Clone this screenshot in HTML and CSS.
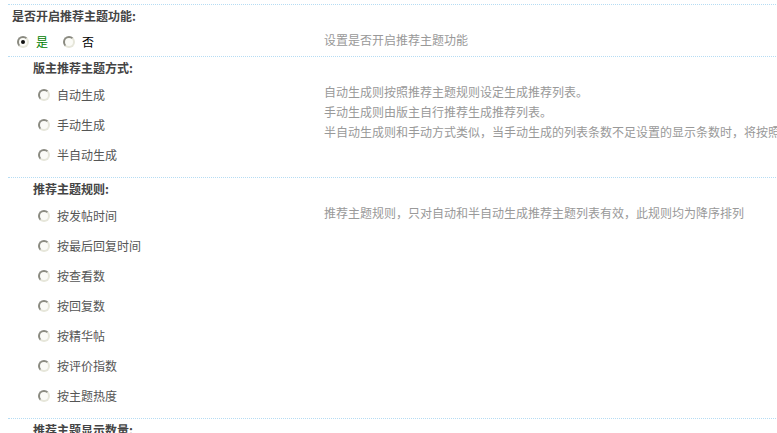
FILE: index.html
```html
<!DOCTYPE html>
<html lang="zh-CN">
<head>
<meta charset="utf-8">
<title>推荐主题设置</title>
<link rel="stylesheet" href="styles.css">
</head>
<body>
<div class="page">
  <section class="sec">
    <div class="title t1">是否开启推荐主题功能:</div>
    <div class="body">
      <div class="opts inline">
        <label class="opt"><span class="radio checked"></span><span class="lbl yes">是</span></label>
        <label class="opt"><span class="radio"></span><span class="lbl no">否</span></label>
      </div>
      <div class="desc">设置是否开启推荐主题功能</div>
    </div>
  </section>

  <section class="sec pad">
    <div class="title t2">版主推荐主题方式:</div>
    <div class="body">
      <div class="opts list">
        <label class="opt"><span class="radio"></span><span class="lbl">自动生成</span></label>
        <label class="opt"><span class="radio"></span><span class="lbl">手动生成</span></label>
        <label class="opt"><span class="radio"></span><span class="lbl">半自动生成</span></label>
      </div>
      <div class="desc">
        <div>自动生成则按照推荐主题规则设定生成推荐列表。</div>
        <div>手动生成则由版主自行推荐生成推荐列表。</div>
        <div>半自动生成则和手动方式类似，当手动生成的列表条数不足设置的显示条数时，将按照推荐主题规则自动补足。</div>
      </div>
    </div>
  </section>

  <section class="sec pad">
    <div class="title t2">推荐主题规则:</div>
    <div class="body">
      <div class="opts list">
        <label class="opt"><span class="radio"></span><span class="lbl">按发帖时间</span></label>
        <label class="opt"><span class="radio"></span><span class="lbl">按最后回复时间</span></label>
        <label class="opt"><span class="radio"></span><span class="lbl">按查看数</span></label>
        <label class="opt"><span class="radio"></span><span class="lbl">按回复数</span></label>
        <label class="opt"><span class="radio"></span><span class="lbl">按精华帖</span></label>
        <label class="opt"><span class="radio"></span><span class="lbl">按评价指数</span></label>
        <label class="opt"><span class="radio"></span><span class="lbl">按主题热度</span></label>
      </div>
      <div class="desc">
        <div>推荐主题规则，只对自动和半自动生成推荐主题列表有效，此规则均为降序排列</div>
      </div>
    </div>
  </section>

  <section class="sec">
    <div class="title t2">推荐主题显示数量:</div>
  </section>
</div>
</body>
</html>
```

FILE: styles.css
```css
html, body {
  margin: 0;
  padding: 0;
  overflow: hidden;
  background: #fff;
}
body {
  font-family: "Noto Sans CJK SC", "Liberation Sans", sans-serif;
  font-size: 12px;
  color: #555;
}
.page {
  width: 1100px;
  padding: 4px 0 0 8px;
}
.sec {
  border-top: 1px dotted #b6dcf3;
}
.sec.pad {
  padding-bottom: 7px;
}
.title {
  font-weight: bold;
  color: #444;
  line-height: 22px;
  height: 22px;
}
.t1 { padding-left: 4px; }
.t2 { padding-left: 25px; }
.body {
  display: grid;
  grid-template-columns: 316px 1fr;
  padding-top: 1px;
}
.opts.inline {
  display: flex;
  align-items: center;
  gap: 15px;
  padding-left: 9px;
  height: 28px;
}
.opts.list {
  display: flex;
  flex-direction: column;
  padding-left: 30px;
}
.opts.list .opt {
  height: 30px;
}
.opt {
  display: flex;
  align-items: center;
  gap: 7px;
}
.radio {
  box-sizing: border-box;
  width: 12px;
  height: 12px;
  border-radius: 50%;
  border: 2px solid;
  border-color: #8a8a80 #e6e6da #e6e6da #8a8a80;
  background: #fbfbf7;
  display: flex;
  align-items: center;
  justify-content: center;
}
.radio.checked::after {
  content: "";
  width: 4px;
  height: 4px;
  border-radius: 50%;
  background: #111;
}
.lbl {
  line-height: 14px;
}
.lbl.yes { color: #008000; }
.lbl.no { color: #000; }
.desc {
  padding-top: 2px;
  line-height: 20px;
  color: #999;
  white-space: nowrap;
}
```
